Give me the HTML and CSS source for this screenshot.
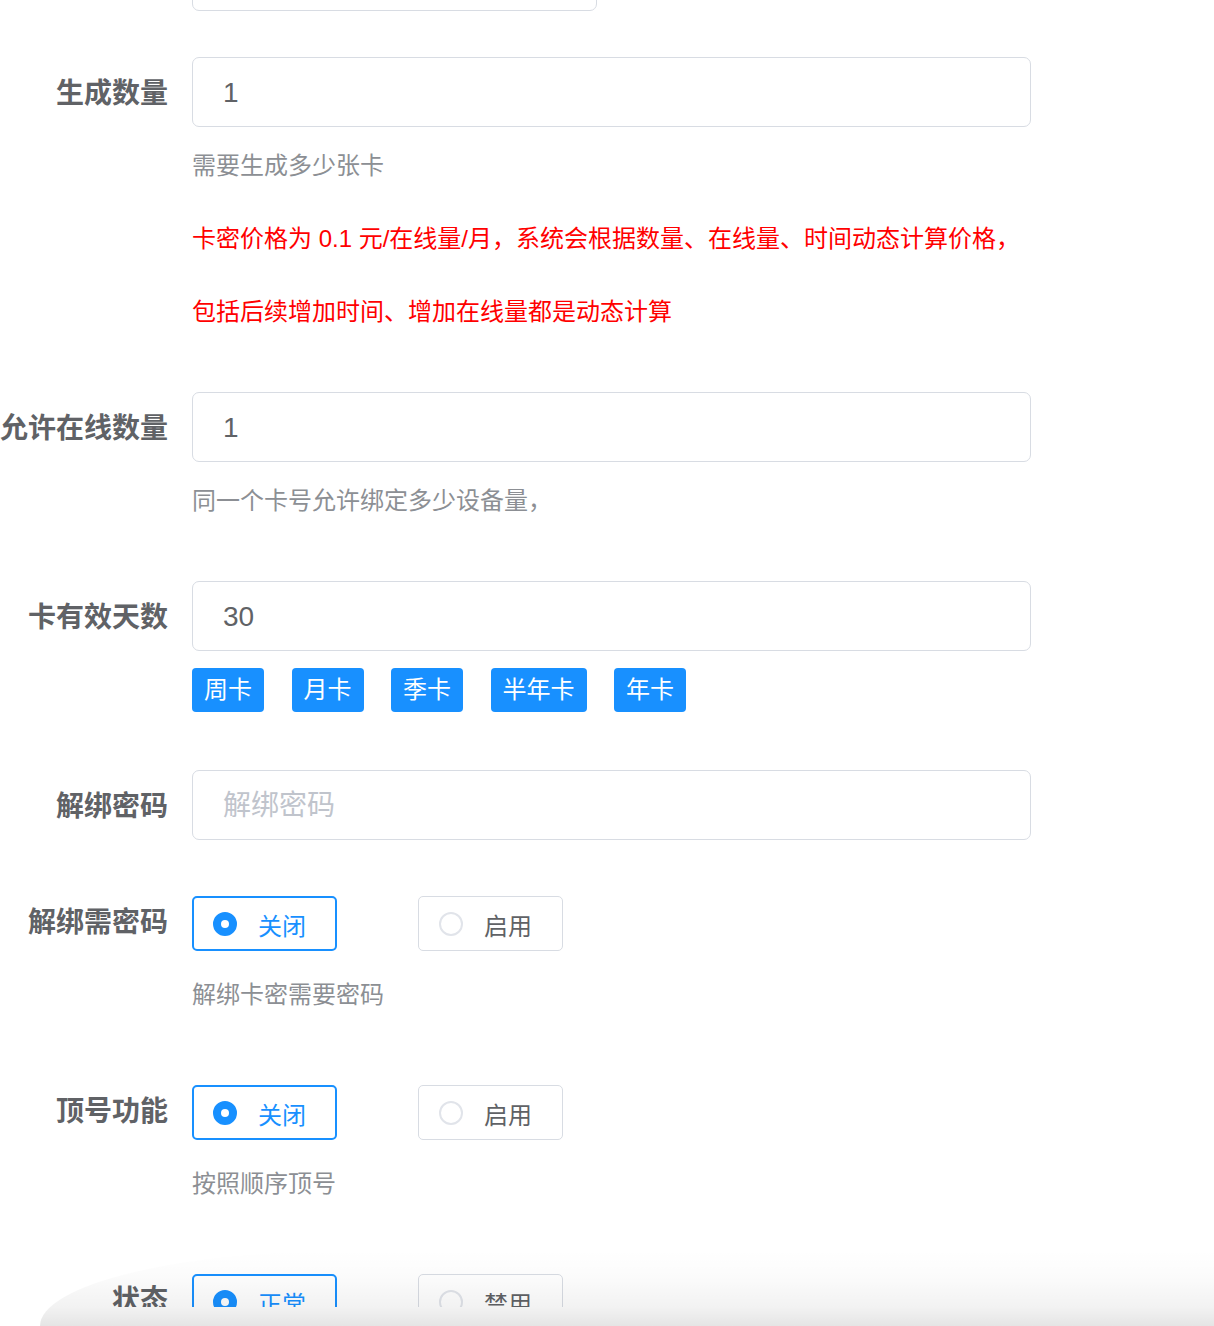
FILE: index.html
```html
<!DOCTYPE html>
<html lang="zh-CN">
<head>
    <meta charset="UTF-8">
    <meta name="viewport" content="width=device-width, initial-scale=1.0">
    <title>生成卡密</title>
    <link rel="stylesheet" href="styles.css">
</head>
<body>
    <div class="page">
        <form class="form">
            <div class="item">
                <label class="item-label"></label>
                <div class="item-content">
                    <input class="input input-short" type="text" value="">
                </div>
            </div>

            <div class="item">
                <label class="item-label">生成数量</label>
                <div class="item-content">
                    <input class="input" type="text" value="1">
                    <div class="help">需要生成多少张卡</div>
                    <div class="tip">卡密价格为 0.1 元/在线量/月，系统会根据数量、在线量、时间动态计算价格，<br>包括后续增加时间、增加在线量都是动态计算</div>
                </div>
            </div>

            <div class="item">
                <label class="item-label">允许在线数量</label>
                <div class="item-content">
                    <input class="input" type="text" value="1">
                    <div class="help">同一个卡号允许绑定多少设备量，</div>
                </div>
            </div>

            <div class="item">
                <label class="item-label">卡有效天数</label>
                <div class="item-content">
                    <input class="input" type="text" value="30">
                    <div class="tags">
                        <span class="tag">周卡</span>
                        <span class="tag">月卡</span>
                        <span class="tag">季卡</span>
                        <span class="tag">半年卡</span>
                        <span class="tag">年卡</span>
                    </div>
                </div>
            </div>

            <div class="item">
                <label class="item-label">解绑密码</label>
                <div class="item-content">
                    <input class="input" type="text" placeholder="解绑密码">
                </div>
            </div>

            <div class="item">
                <label class="item-label">解绑需密码</label>
                <div class="item-content">
                    <div class="radio-group">
                        <span class="radio is-checked"><span class="radio-dot"></span>关闭</span>
                        <span class="radio"><span class="radio-dot"></span>启用</span>
                    </div>
                    <div class="help">解绑卡密需要密码</div>
                </div>
            </div>

            <div class="item">
                <label class="item-label">顶号功能</label>
                <div class="item-content">
                    <div class="radio-group">
                        <span class="radio is-checked"><span class="radio-dot"></span>关闭</span>
                        <span class="radio"><span class="radio-dot"></span>启用</span>
                    </div>
                    <div class="help">按照顺序顶号</div>
                </div>
            </div>

            <div class="item">
                <label class="item-label">状态</label>
                <div class="item-content">
                    <div class="radio-group">
                        <span class="radio is-checked"><span class="radio-dot"></span>正常</span>
                        <span class="radio"><span class="radio-dot"></span>禁用</span>
                    </div>
                </div>
            </div>
        </form>
    </div>
    <div class="bottom-shade"></div>
</body>
</html>
```

FILE: styles.css
```css
html, body {
    margin: 0;
    background: white;
}
body {
    font-family: "Liberation Sans", "Noto Sans CJK SC", sans-serif;
    color: #606266;
    height: 1326px;
    overflow: hidden;
    position: relative;
}
.page {
    height: 1307px;
    overflow: hidden;
}
.form {
    margin-top: -59px;
}
.item {
    display: flex;
    margin-bottom: 46px;
}
.item-label {
    flex: none;
    box-sizing: border-box;
    width: 192px;
    height: 70px;
    padding: 2px 24px 0 0;
    text-align: right;
    font-size: 28px;
    font-weight: bold;
    line-height: 70px;
    color: #606266;
    white-space: nowrap;
}
.item-content {
    width: 839px;
}
.input {
    display: block;
    box-sizing: border-box;
    width: 100%;
    height: 70px;
    padding: 2px 30px 0;
    border: 1px solid #d8dce3;
    border-radius: 7px;
    font-family: inherit;
    font-size: 28px;
    color: #606266;
    outline: none;
}
.input::placeholder {
    color: #c0c4cc;
}
.input-short {
    width: 405px;
}
.help {
    box-sizing: border-box;
    height: 73px;
    padding-top: 2px;
    font-size: 24px;
    line-height: 73px;
    color: #8c8f94;
}
.tip {
    box-sizing: border-box;
    height: 146px;
    padding-top: 2px;
    font-size: 24px;
    line-height: 73px;
    color: #ff0000;
}
.tags {
    display: flex;
    gap: 27.5px;
    box-sizing: border-box;
    height: 73px;
    padding-top: 17px;
}
.tag {
    height: 44px;
    padding: 0 12px;
    border-radius: 4px;
    background: #1890ff;
    color: white;
    font-size: 24px;
    line-height: 44px;
}
.radio-group {
    display: flex;
    gap: 81px;
    box-sizing: border-box;
    height: 70px;
    padding-top: 10px;
}
.radio {
    display: inline-flex;
    align-items: center;
    box-sizing: border-box;
    height: 55px;
    padding: 2px 30px 0 20px;
    border: 1px solid #d8dce3;
    border-radius: 5px;
    font-size: 24px;
    color: #606266;
}
.radio-dot {
    box-sizing: border-box;
    width: 24px;
    height: 24px;
    margin: -2px 21px 0 0;
    border: 2px solid #e1e4ea;
    border-radius: 50%;
    background: white;
    position: relative;
}
.radio.is-checked {
    border: 2px solid #1890ff;
    padding-left: 19px;
    padding-right: 29px;
    color: #1890ff;
}
.radio.is-checked .radio-dot {
    border-color: #1890ff;
    background: #1890ff;
}
.radio.is-checked .radio-dot::after {
    content: "";
    position: absolute;
    left: 50%;
    top: 50%;
    width: 8px;
    height: 8px;
    margin: -4px 0 0 -4px;
    border-radius: 50%;
    background: white;
}
.bottom-shade {
    position: absolute;
    left: 40px;
    right: 0;
    bottom: 0;
    height: 76px;
    border-top-left-radius: 320px 76px;
    background: linear-gradient(to bottom, rgba(0, 0, 0, 0) 0%, rgba(0, 0, 0, 0.015) 35%, rgba(0, 0, 0, 0.05) 75%, rgba(0, 0, 0, 0.1) 100%);
}
```
